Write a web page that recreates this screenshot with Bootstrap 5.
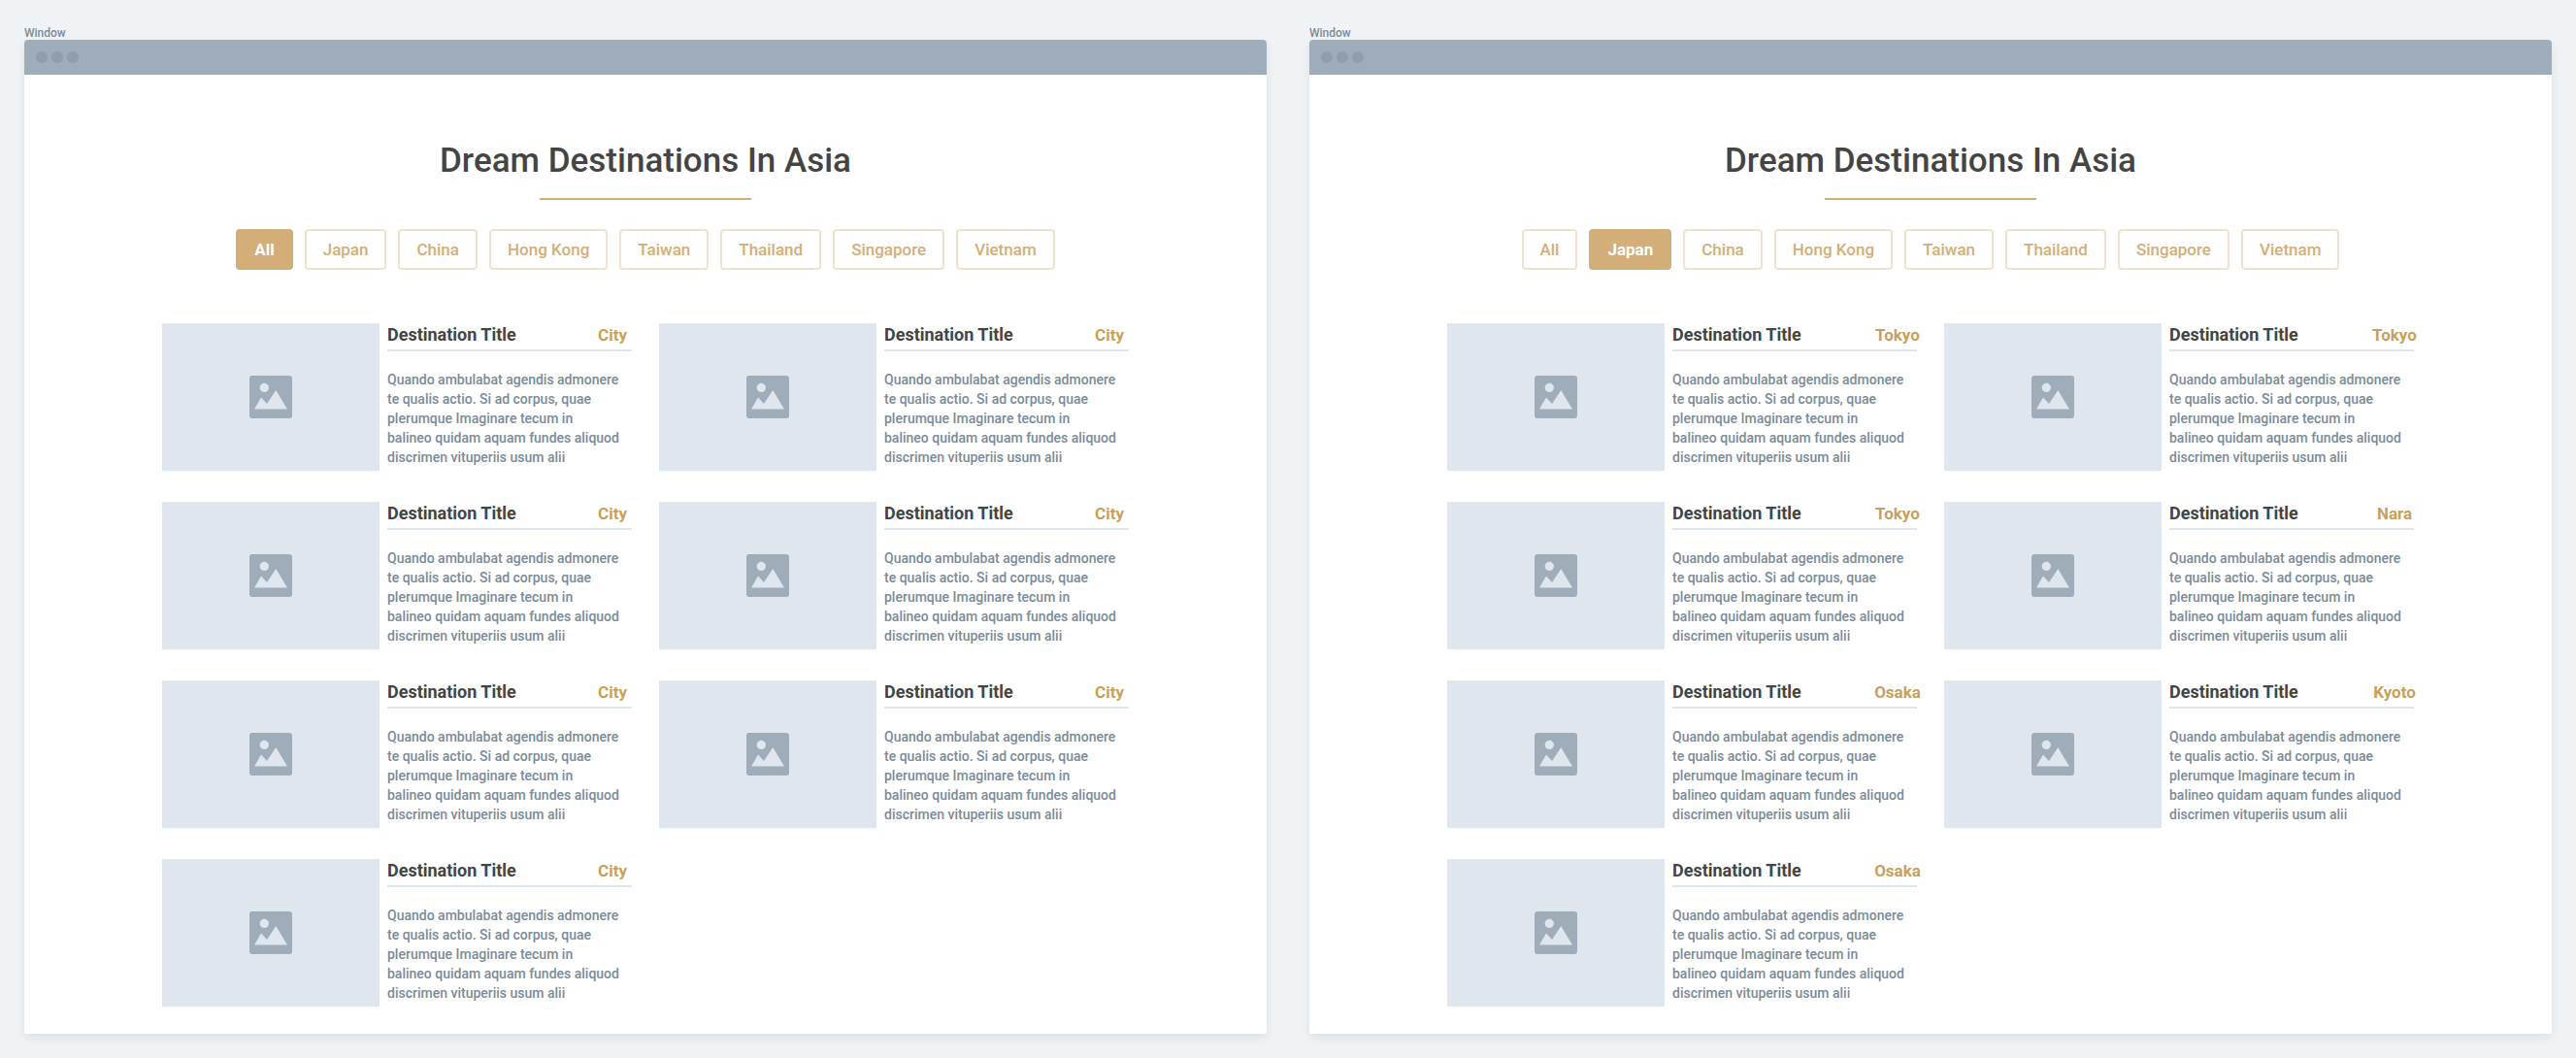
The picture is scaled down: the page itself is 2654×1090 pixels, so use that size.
<!DOCTYPE html>
<html lang="en">
<head>
<meta charset="utf-8">
<meta name="viewport" content="width=device-width, initial-scale=1">
<title>Dream Destinations In Asia</title>
<link href="https://cdn.jsdelivr.net/npm/bootstrap@5.3.0/dist/css/bootstrap.min.css" rel="stylesheet">
<style>
  body { background: #eff3f6; font-family: Roboto, "Liberation Sans", sans-serif; }
  .board { padding: 27px 25px 25px; gap: 44px; }
  .frame { flex: 1 1 0; min-width: 0; }
  .frame-label { font-size: 12px; line-height: 14px; font-weight: 500; color: #7a8b99; }
  .frame-window { background: #fff; border-radius: 4px 4px 0 0; box-shadow: 0 4px 10px rgba(0,0,0,.08); padding-bottom: 28px; }
  .frame-bar { height: 36px; padding-left: 12px; gap: 4px; background: #9eadb9; border-radius: 4px 4px 0 0; }
  .frame-dot { width: 12px; height: 12px; background: #8e9ead; }
  .page-title { margin: 67px 0 16px; font-size: 35px; line-height: 44px; font-weight: 500; color: #444; }
  .title-rule { width: 218px; height: 2px; margin: 0 auto 30px; background: #d3ae78; }
  .filters { gap: 12px; margin-bottom: 55px; }
  .btn-filter {
    --bs-btn-font-size: 17px; --bs-btn-line-height: 24px; --bs-btn-font-weight: 500;
    --bs-btn-padding-x: 17px; --bs-btn-padding-y: 7px;
    --bs-btn-border-width: 2px; --bs-btn-border-radius: 4px;
    --bs-btn-color: #d3ae78; --bs-btn-border-color: #f0e2cd;
    --bs-btn-hover-color: #fff; --bs-btn-hover-bg: #d3ae78; --bs-btn-hover-border-color: #d3ae78;
    --bs-btn-active-color: #fff; --bs-btn-active-bg: #d3ae78; --bs-btn-active-border-color: #d3ae78;
  }
  .btn-filter.active { --bs-btn-font-weight: 700; }
  .places { max-width: 996px; }
  .places > .row { --bs-gutter-x: 28px; --bs-gutter-y: 32px; }
  .place { gap: 8px; }
  .place-photo { width: 224px; height: 152px; background: #dfe6ee; }
  .place-photo svg { width: 44px; height: 44px; }
  .place-info { min-width: 0; }
  .place-head { padding-bottom: 3px; border-bottom: 2px solid #dfe6ee; }
  .place-name { margin: 0; font-size: 18px; line-height: 24px; font-weight: 700; color: #444; }
  .place-city { width: 40px; font-size: 17px; line-height: 24px; font-weight: 700; color: #c99f5c; }
  .place-text { margin: 19px 0 0; font-size: 14px; line-height: 20px; font-weight: 500; color: #7a8b99; white-space: nowrap; }
</style>
<script src="https://cdn.jsdelivr.net/npm/bootstrap@5.3.0/dist/js/bootstrap.bundle.min.js"></script>
</head>
<body>
<svg class="d-none" aria-hidden="true">
  <symbol id="photo" viewBox="0 0 44 44">
    <rect width="44" height="44" rx="3" fill="#9eadb9"/>
    <circle cx="15.3" cy="12.4" r="4.6" fill="#dfe6ee"/>
    <path d="M5 34.5 12 22.5 18 29 27.3 15 39 34.5Z" fill="#dfe6ee"/>
  </symbol>
</svg>
<template id="place-template">
  <div class="col">
    <article class="place d-flex">
      <div class="place-photo flex-shrink-0 d-flex align-items-center justify-content-center"><svg role="img" aria-label="Photo"><use href="#photo"/></svg></div>
      <div class="place-info flex-grow-1">
        <div class="place-head d-flex justify-content-between">
          <h2 class="place-name">Destination Title</h2>
          <span class="place-city d-flex justify-content-center"></span>
        </div>
        <p class="place-text">Quando ambulabat agendis admonere<br>te qualis actio. Si ad corpus, quae<br>plerumque Imaginare tecum in<br>balineo quidam aquam fundes aliquod<br>discrimen vituperiis usum alii</p>
      </div>
    </article>
  </div>
</template>

<main class="board d-flex">
  <section class="frame">
    <div class="frame-label">Window</div>
    <div class="frame-window">
      <div class="frame-bar d-flex align-items-center">
        <span class="frame-dot rounded-circle"></span><span class="frame-dot rounded-circle"></span><span class="frame-dot rounded-circle"></span>
      </div>
      <h1 class="page-title text-center">Dream Destinations In Asia</h1>
      <div class="title-rule"></div>
      <div class="filters d-flex flex-wrap justify-content-center">
        <button type="button" class="btn btn-filter active">All</button>
        <button type="button" class="btn btn-filter">Japan</button>
        <button type="button" class="btn btn-filter">China</button>
        <button type="button" class="btn btn-filter">Hong Kong</button>
        <button type="button" class="btn btn-filter">Taiwan</button>
        <button type="button" class="btn btn-filter">Thailand</button>
        <button type="button" class="btn btn-filter">Singapore</button>
        <button type="button" class="btn btn-filter">Vietnam</button>
      </div>
      <div class="places mx-auto">
        <div class="row row-cols-2" data-cities="City,City,City,City,City,City,City"></div>
      </div>
    </div>
  </section>

  <section class="frame">
    <div class="frame-label">Window</div>
    <div class="frame-window">
      <div class="frame-bar d-flex align-items-center">
        <span class="frame-dot rounded-circle"></span><span class="frame-dot rounded-circle"></span><span class="frame-dot rounded-circle"></span>
      </div>
      <h1 class="page-title text-center">Dream Destinations In Asia</h1>
      <div class="title-rule"></div>
      <div class="filters d-flex flex-wrap justify-content-center">
        <button type="button" class="btn btn-filter">All</button>
        <button type="button" class="btn btn-filter active">Japan</button>
        <button type="button" class="btn btn-filter">China</button>
        <button type="button" class="btn btn-filter">Hong Kong</button>
        <button type="button" class="btn btn-filter">Taiwan</button>
        <button type="button" class="btn btn-filter">Thailand</button>
        <button type="button" class="btn btn-filter">Singapore</button>
        <button type="button" class="btn btn-filter">Vietnam</button>
      </div>
      <div class="places mx-auto">
        <div class="row row-cols-2" data-cities="Tokyo,Tokyo,Tokyo,Nara,Osaka,Kyoto,Osaka"></div>
      </div>
    </div>
  </section>
</main>
<script>
  const template = document.getElementById('place-template');
  document.querySelectorAll('[data-cities]').forEach(row => {
    row.dataset.cities.split(',').forEach(city => {
      const card = template.content.cloneNode(true);
      card.querySelector('.place-city').textContent = city;
      row.append(card);
    });
  });
</script>
</body>
</html>
